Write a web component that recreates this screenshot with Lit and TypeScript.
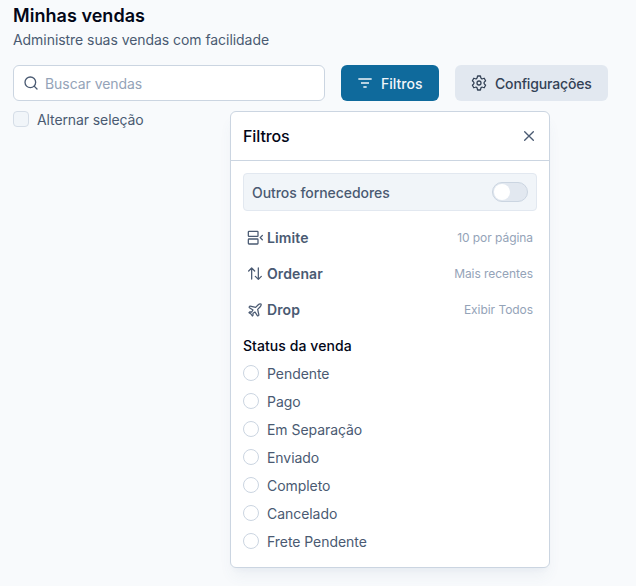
import { LitElement, html, css, svg } from "lit";
import { customElement, property } from "lit/decorators.js";

const ICONS: Record<string, unknown> = {
  search: svg`<circle cx="11" cy="11" r="8"/><path d="m21 21-4.300-4.300"/>`,
  filter: svg`<path d="M2 6h20M6 12h12M9.500 18h5" stroke-linecap="butt" stroke-width="2.400"/>`,
  gear: svg`<circle cx="12" cy="12" r="3"/><path d="M9.300 4 9.900 1.500h4.200L14.700 4a2.100 2.100 0 0 0 2.800 1.600l2.300-.7 2.100 3.700-1.700 1.800a2.200 2.200 0 0 0 0 3.200l1.700 1.800-2.100 3.700-2.300-.7a2.100 2.100 0 0 0-2.800 1.600l-.6 2.500H9.900L9.300 20a2.100 2.100 0 0 0-2.800-1.600l-2.300.7-2.100-3.700 1.700-1.800a2.200 2.200 0 0 0 0-3.200L2.100 8.600l2.100-3.700 2.300.7A2.100 2.100 0 0 0 9.300 4Z"/>`,
  close: svg`<path d="M18.500 5.500 5.500 18.500M5.500 5.500l13 13"/>`,
  limit: svg`<rect x="2" y="2" width="14.500" height="7.500" rx="1"/><rect x="2" y="13.500" width="14.500" height="7.500" rx="1"/><path d="m23 8.300-3.200 3.200 3.200 3.200"/>`,
  sort: svg`<path d="M7 19.500V3M2.500 7.500 7 3l4.500 4.500M17 3v17M12.500 15.500 17 20l4.500-4.500"/>`,
  plane: svg`<path d="M17.800 19.200 16 11l3.500-3.500C21 6 21.500 4 21 3c-1-.5-3 0-4.500 1.500L13 8 4.800 6.200c-.5-.1-.9.1-1.100.5l-.3.5c-.2.5-.1 1 .3 1.300L9 12l-2 3H4l-1 1 3 2 2 3 1-1v-3l3-2 3.500 5.300c.3.4.8.5 1.300.3l.5-.2c.4-.3.6-.7.5-1.200z"/>`,
};

@customElement("ui-icon")
class UiIcon extends LitElement {
  @property() name = "";
  static styles = css`
    :host { display: block; width: 16px; height: 16px; flex: none; }
    svg { display: block; width: 100%; height: 100%; fill: none; stroke: currentColor;
      stroke-width: var(--stroke, 2); stroke-linecap: round; stroke-linejoin: round; }
  `;
  render() {
    return html`<svg viewBox="0 0 24 24">${ICONS[this.name]}</svg>`;
  }
}

const OPTIONS = [
  { icon: "limit", label: "Limite", value: "10 por página" },
  { icon: "sort", label: "Ordenar", value: "Mais recentes" },
  { icon: "plane", label: "Drop", value: "Exibir Todos" },
];

const STATUSES = ["Pendente", "Pago", "Em Separação", "Enviado", "Completo", "Cancelado", "Frete Pendente"];

@customElement("app-root")
class AppRoot extends LitElement {
  static styles = css`
    * { box-sizing: border-box; }
    :host { display: block; box-sizing: border-box; height: 586px; padding: 2px 13px 0; overflow: hidden;
      background: #f8fafc; color: #4a5a72; font: 14px/20px Inter, sans-serif; letter-spacing: -0.055px; }
    h1 { margin: 0; font-size: 18px; line-height: 28px; font-weight: 600; letter-spacing: 0.04px; color: #020617; }
    p { margin: 0; }
    .toolbar { display: flex; gap: 16px; margin-top: 15px; }
    .search { display: flex; align-items: center; gap: 6px; width: 312px; height: 36px; padding: 0 9px;
      border: 1px solid #cbd5e1; border-radius: 6px; background: #fff; }
    .search input { flex: 1; min-width: 0; border: 0; padding: 2px 0 0; outline: 0; background: none;
      font: inherit; letter-spacing: inherit; color: inherit; }
    .search input::placeholder { color: #94a3b8; opacity: 1; }
    button { display: flex; align-items: center; border: 0; padding: 0; background: none; font: inherit;
      letter-spacing: inherit; color: inherit; }
    .btn { height: 36px; gap: 8px; padding: 0 16px; border-radius: 6px; font-weight: 500; }
    .btn span { padding-top: 2px; }
    .primary { width: 98px; background: #0f6a9c; color: #f1f5f9; letter-spacing: 0; }
    .secondary { width: 153px; background: #e2e8f0; color: #334155; letter-spacing: -0.16px; }
    .anchor { position: relative; margin-top: 10px; }
    .check { display: flex; align-items: flex-start; gap: 8px; letter-spacing: -0.1px; }
    .check i { width: 16px; height: 16px; border: 1px solid #d5dde7; border-radius: 4px; background: #f1f5f9; }
    .check span { margin-top: -1px; }
    .popover { position: absolute; left: 217px; top: 0; width: 320px; height: 457px; border: 1px solid #cbd5e1;
      border-radius: 6px; background: #fff; box-shadow: 0 10px 15px -3px #47688a12, 0 4px 6px -4px #47688a12; }
    .head { display: flex; align-items: center; justify-content: space-between; height: 49px; padding: 0 12px;
      border-bottom: 1px solid #cbd5e1; }
    h2 { margin: 0; font-size: 16px; line-height: 24px; font-weight: 500; letter-spacing: -0.1px; color: #020617; }
    .body { padding: 12px; }
    .provider { display: flex; align-items: center; justify-content: space-between; height: 38px; padding: 0 8px;
      border: 1px solid #e2e8f0; border-radius: 4px; background: #f1f5f9; font-weight: 500; }
    .provider span { padding-top: 1px; }
    .switch { width: 36px; height: 20px; padding: 1px; border: 1px solid #cbd5e1; border-radius: 10px; background: #e2e8f0; }
    .switch::before { content: ""; display: block; width: 16px; height: 16px; border-radius: 50%; background: #fff; }
    .options { margin-top: 9px; }
    .option { display: flex; align-items: center; height: 36px; padding: 0 4px; }
    .option ui-icon { margin-bottom: 1px; }
    .option b { flex: 1; margin-left: 4px; font-weight: 600; letter-spacing: 0.1px; }
    .option small { font-size: 12px; line-height: 16px; color: #94a3b8; }
    h3 { margin: 8px 0; font-size: 14px; line-height: 20px; font-weight: 500; letter-spacing: 0.07px; color: #020617; }
    .statuses { display: grid; gap: 8px; }
    .status { display: flex; height: 20px; gap: 8px; }
    .status i { width: 16px; height: 16px; margin-top: 1px; border: 1px solid #cbd5e1; border-radius: 50%; }
    .thin { --stroke: 1.9; }
  `;
  render() {
    return html`
      <h1>Minhas vendas</h1>
      <p>Administre suas vendas com facilidade</p>
      <div class="toolbar">
        <label class="search"><ui-icon name="search"></ui-icon><input placeholder="Buscar vendas" /></label>
        <button class="btn primary"><ui-icon name="filter"></ui-icon><span>Filtros</span></button>
        <button class="btn secondary"><ui-icon class="thin" name="gear"></ui-icon><span>Configurações</span></button>
      </div>
      <div class="anchor">
        <div class="check"><i></i><span>Alternar seleção</span></div>
        <section class="popover">
          <header class="head"><h2>Filtros</h2><button><ui-icon name="close"></ui-icon></button></header>
          <div class="body">
            <div class="provider"><span>Outros fornecedores</span><i class="switch"></i></div>
            <div class="options">
              ${OPTIONS.map((o) => html`<div class="option">
                <ui-icon class="thin" name=${o.icon}></ui-icon><b>${o.label}</b><small>${o.value}</small>
              </div>`)}
            </div>
            <h3>Status da venda</h3>
            <div class="statuses">
              ${STATUSES.map((s) => html`<div class="status"><i></i><span>${s}</span></div>`)}
            </div>
          </div>
        </section>
      </div>`;
  }
}
